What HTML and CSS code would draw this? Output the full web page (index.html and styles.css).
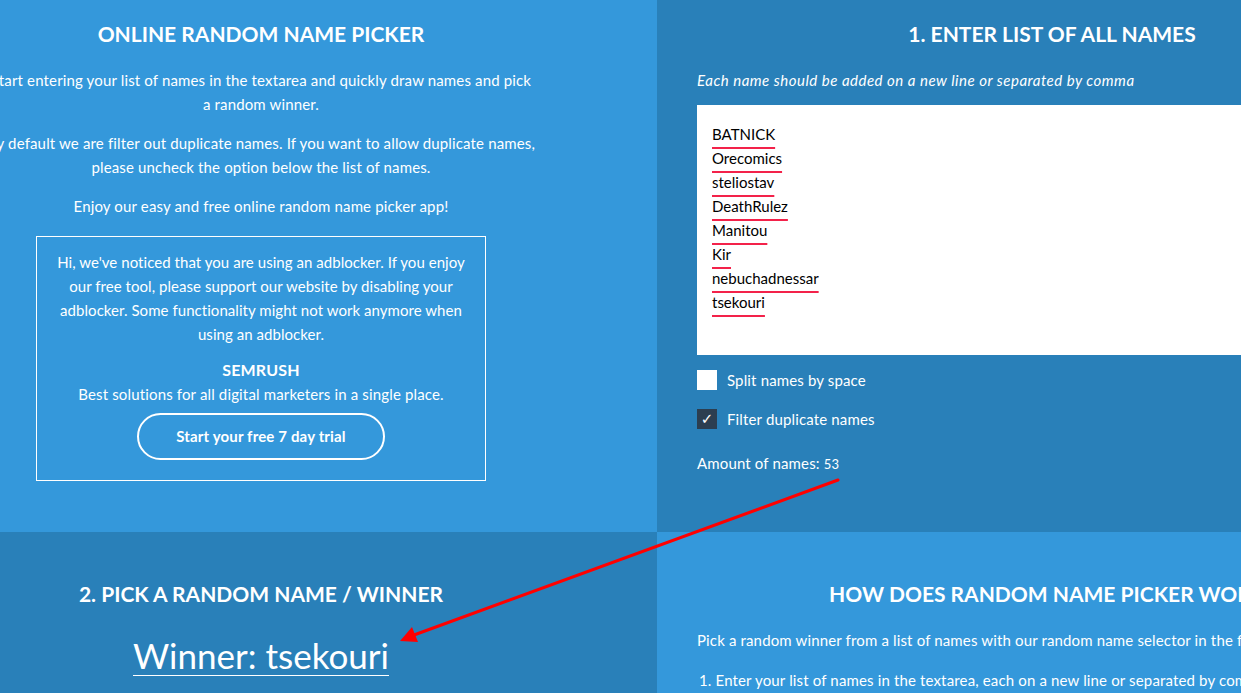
FILE: index.html
```html
<!DOCTYPE html>
<html lang="en">
<head>
  <meta charset="UTF-8">
  <title>Online Random Name Picker</title>
  <link rel="stylesheet" href="styles.css">
</head>
<body>
  <div class="page">

    <section class="panel light intro">
      <h1>ONLINE RANDOM NAME PICKER</h1>
      <p>Start entering your list of names in the textarea and quickly draw names and pick a&nbsp;random winner.</p>
      <p>By default we are filter out duplicate names. If you want to allow duplicate names, please uncheck the option below the list of names.</p>
      <p>Enjoy our easy and free online random name picker app!</p>

      <div class="adblock">
        <p>Hi, we've noticed that you are using an adblocker. If you enjoy our free tool, please support our website by disabling your adblocker. Some functionality might not work anymore when using an adblocker.</p>
        <p class="sponsor"><strong>SEMRUSH</strong><br>Best solutions for all digital marketers in a single place.</p>
        <a class="trial-btn" href="#">Start your free 7 day trial</a>
      </div>
    </section>

    <section class="panel dark entry">
      <h1>1. ENTER LIST OF ALL NAMES</h1>
      <p class="hint">Each name should be added on a new line or separated by comma</p>

      <div class="names">
        <div><span>BATNICK</span></div>
        <div><span>Orecomics</span></div>
        <div><span>steliostav</span></div>
        <div><span>DeathRulez</span></div>
        <div><span>Manitou</span></div>
        <div><span>Kir</span></div>
        <div><span>nebuchadnessar</span></div>
        <div><span>tsekouri</span></div>
      </div>

      <label class="option">
        <span class="box"></span>
        Split names by space
      </label>
      <label class="option">
        <span class="box checked">&#10003;</span>
        Filter duplicate names
      </label>

      <p class="amount">Amount of names: <small>53</small></p>
    </section>

    <section class="panel dark pick">
      <h1>2. PICK A RANDOM NAME / WINNER</h1>
      <div class="winner"><span>Winner: tsekouri</span></div>
    </section>

    <section class="panel light how">
      <h1>HOW DOES RANDOM NAME PICKER WORK?</h1>
      <p>Pick a random winner from a list of names with our random name selector in the following steps:</p>
      <ol>
        <li>Enter your list of names in the textarea, each on a new line or separated by comma.</li>
      </ol>
    </section>

  </div>

  <!-- annotation arrow drawn over the screenshot -->
  <svg class="arrow" width="1241" height="693" viewBox="0 0 1241 693">
    <line x1="838" y1="480" x2="414" y2="635" stroke="#ff0000" stroke-width="3" stroke-linecap="round"/>
    <polygon points="400,641 412,627 418,642" fill="#ff0000"/>
  </svg>
</body>
</html>
```

FILE: styles.css
```css
body {
  margin: 0;
  overflow: hidden;
  font-family: 'Lato', 'Open Sans', sans-serif;
  font-size: 15px;
  line-height: 24px;
  letter-spacing: 0.15px;
  color: #fff;
  background-color: #3498db;
}

.page {
  display: grid;
  grid-template-columns: 792px 790px;
  grid-template-rows: 532px auto;
  margin-left: -135px;
  width: 1582px;
}

.panel {
  padding: 20px 40px 40px;
  box-sizing: border-box;
}

.light {
  background-color: #3498db;
}

.dark {
  background-color: #2980b9;
}

h1 {
  margin: 0 0 20px;
  font-size: 21px;
  line-height: 28px;
  font-weight: bold;
  letter-spacing: 0;
  text-align: center;
}

p {
  margin: 0;
}

/* intro */
.intro {
  text-align: center;
}

.intro > p {
  max-width: 550px;
  margin: 0 auto 15px;
}

.adblock {
  width: 450px;
  margin: 18px auto 0;
  padding: 13px 18px 20px;
  box-sizing: border-box;
  border: 1px solid #fff;
  letter-spacing: 0.05px;
}

.adblock .sponsor {
  margin-top: 12px;
  letter-spacing: 0.15px;
}

.adblock strong {
  font-size: 16px;
}

.trial-btn {
  display: inline-block;
  margin-top: 7px;
  padding: 0 37px;
  height: 43px;
  line-height: 43px;
  border: 2px solid #fff;
  border-radius: 25px;
  color: #fff;
  font-weight: bold;
  letter-spacing: 0.15px;
  text-decoration: none;
}

/* entry */
.hint {
  font-style: italic;
  letter-spacing: 0.5px;
  margin-bottom: 13px;
}

.names {
  height: 250px;
  box-sizing: border-box;
  padding: 17px 15px;
  background-color: #fff;
  color: #000;
  letter-spacing: 0;
}

.names span {
  text-decoration: underline #f3224a 2px;
  text-underline-offset: 7px;
}

.option {
  display: flex;
  align-items: center;
  gap: 10px;
  height: 20px;
  margin-top: 15px;
}

.option + .option {
  margin-top: 19px;
}

.box {
  width: 20px;
  height: 20px;
  background-color: #fff;
  color: #fff;
  font-family: 'DejaVu Sans', sans-serif;
  font-size: 15px;
  line-height: 20px;
  text-align: center;
}

.box.checked {
  background-color: #2c3e50;
}

.amount {
  margin-top: 22px;
}

.amount small {
  font-size: 13px;
}

/* pick */
.pick,
.how {
  padding-top: 48px;
}

.winner {
  margin-top: 27px;
  text-align: center;
}

.winner span {
  display: inline-block;
  font-size: 35px;
  line-height: 40px;
  letter-spacing: 0;
  border-bottom: 1px solid #fff;
}

/* how */
.how p {
  margin-bottom: 16px;
  white-space: nowrap;
}

.how ol {
  margin: 0;
  padding: 0 0 0 2px;
  list-style-position: inside;
  white-space: nowrap;
}

.arrow {
  position: absolute;
  top: 0;
  left: 0;
  pointer-events: none;
}
```
